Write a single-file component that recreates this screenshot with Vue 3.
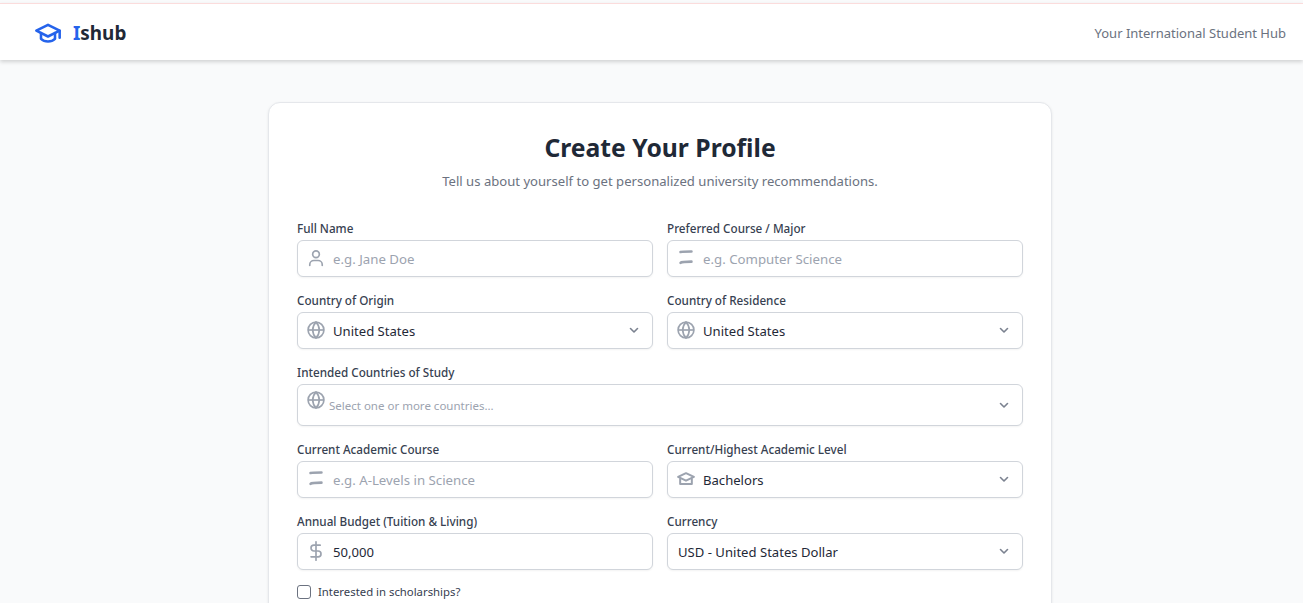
<template>
  <div class="page">
    <header class="topbar">
      <div class="brand">
        <svg class="brand-icon" viewBox="0 0 24 24" fill="none" stroke="currentColor" stroke-width="2.2" stroke-linecap="round" stroke-linejoin="round">
          <path d="M22 10v6" />
          <path d="M2 10l10-5 10 5-10 5z" />
          <path d="M6 12v5c3 3 9 3 12 0v-5" />
        </svg>
        <span class="brand-name"><span class="brand-i">I</span>shub</span>
      </div>
      <span class="tagline">Your International Student Hub</span>
    </header>

    <main class="content">
      <section class="card">
        <h1>Create Your Profile</h1>
        <p class="lead">Tell us about yourself to get personalized university recommendations.</p>

        <form class="form" @submit.prevent>
          <div class="field">
            <label>Full Name</label>
            <div class="control">
              <svg class="icon" viewBox="0 0 24 24" fill="none" stroke="currentColor" stroke-width="2" stroke-linecap="round" stroke-linejoin="round">
                <circle cx="12" cy="7.500" r="4" />
                <path d="M4.500 21v-1a5 5 0 0 1 5-5h5a5 5 0 0 1 5 5v1" />
              </svg>
              <input type="text" placeholder="e.g. Jane Doe" />
            </div>
          </div>

          <div class="field">
            <label>Preferred Course / Major</label>
            <div class="control">
              <svg class="icon" viewBox="0 0 24 24" fill="none" stroke="currentColor" stroke-width="3.200" stroke-linecap="round">
                <path d="M5.500 4.800c2-.6 8-.6 13-.6" />
                <path d="M5.500 17.800c1-1 3-1.400 13-1.400" />
              </svg>
              <input type="text" placeholder="e.g. Computer Science" />
            </div>
          </div>

          <div class="field" v-for="f in countryFields" :key="f">
            <label>{{ f }}</label>
            <div class="control">
              <svg class="icon" viewBox="0 0 24 24" fill="none" stroke="currentColor" stroke-width="2">
                <circle cx="12" cy="12" r="9.500" />
                <path d="M2.500 12h19" />
                <path d="M12 2.500c2.800 2.800 3.900 6 3.900 9.500s-1.100 6.700-3.900 9.500c-2.800-2.800-3.900-6-3.900-9.500s1.100-6.700 3.900-9.500z" />
              </svg>
              <select>
                <option>United States</option>
              </select>
              <svg class="chevron" viewBox="0 0 20 20" fill="none" stroke="currentColor" stroke-width="1.600" stroke-linecap="round" stroke-linejoin="round">
                <path d="M6.500 8.500l3.500 3.500 3.500-3.500" />
              </svg>
            </div>
          </div>

          <div class="field wide">
            <label>Intended Countries of Study</label>
            <div class="control multi">
              <svg class="icon" viewBox="0 0 24 24" fill="none" stroke="currentColor" stroke-width="2">
                <circle cx="12" cy="12" r="9.500" />
                <path d="M2.500 12h19" />
                <path d="M12 2.500c2.800 2.800 3.900 6 3.900 9.500s-1.100 6.700-3.900 9.500c-2.800-2.800-3.900-6-3.900-9.500s1.100-6.700 3.900-9.500z" />
              </svg>
              <span class="multi-hint">Select one or more countries...</span>
              <svg class="chevron" viewBox="0 0 20 20" fill="none" stroke="currentColor" stroke-width="1.600" stroke-linecap="round" stroke-linejoin="round">
                <path d="M6.500 8.500l3.500 3.500 3.500-3.500" />
              </svg>
            </div>
          </div>

          <div class="field">
            <label>Current Academic Course</label>
            <div class="control">
              <svg class="icon" viewBox="0 0 24 24" fill="none" stroke="currentColor" stroke-width="3.200" stroke-linecap="round">
                <path d="M5.500 4.800c2-.6 8-.6 13-.6" />
                <path d="M5.500 17.800c1-1 3-1.400 13-1.400" />
              </svg>
              <input type="text" placeholder="e.g. A-Levels in Science" />
            </div>
          </div>

          <div class="field">
            <label>Current/Highest Academic Level</label>
            <div class="control">
              <svg class="icon" viewBox="0 0 24 24" fill="none" stroke="currentColor" stroke-width="2.400" stroke-linejoin="round">
                <path d="M2.500 9.500L12 5l9.500 4.500L12 14z" />
                <path d="M5 11v7h14v-7" />
              </svg>
              <select>
                <option>Bachelors</option>
              </select>
              <svg class="chevron" viewBox="0 0 20 20" fill="none" stroke="currentColor" stroke-width="1.600" stroke-linecap="round" stroke-linejoin="round">
                <path d="M6.500 8.500l3.500 3.500 3.500-3.500" />
              </svg>
            </div>
          </div>

          <div class="field">
            <label>Annual Budget (Tuition &amp; Living)</label>
            <div class="control">
              <svg class="icon" viewBox="0 0 24 24" fill="none" stroke="currentColor" stroke-width="2" stroke-linecap="round" stroke-linejoin="round">
                <path d="M12 1v22" />
                <path d="M17 5H9.500a3.500 3.500 0 0 0 0 7h5a3.500 3.500 0 0 1 0 7H6" />
              </svg>
              <input type="text" value="50,000" />
            </div>
          </div>

          <div class="field">
            <label>Currency</label>
            <div class="control plain">
              <select>
                <option>USD - United States Dollar</option>
              </select>
              <svg class="chevron" viewBox="0 0 20 20" fill="none" stroke="currentColor" stroke-width="1.600" stroke-linecap="round" stroke-linejoin="round">
                <path d="M6.500 8.500l3.500 3.500 3.500-3.500" />
              </svg>
            </div>
          </div>

          <label class="check wide">
            <input type="checkbox" />
            <span>Interested in scholarships?</span>
          </label>
        </form>
      </section>
    </main>
  </div>
</template>

<script setup>
const countryFields = ['Country of Origin', 'Country of Residence']
</script>

<style>
html, body {
  overflow: hidden;
  height: 100%;
}
</style>

<style scoped>
.page {
  box-sizing: border-box;
  min-height: 100vh;
  padding-top: 3px;
  background: #f9fafb;
  font-family: "Noto Sans", "Open Sans", sans-serif;
  color: #1f2937;
}

.topbar {
  display: flex;
  align-items: center;
  justify-content: space-between;
  height: 54px;
  padding: 2px 17px 0 34px;
  background: #fff;
  border-top: 1px solid #fbdcdc;
  box-shadow: 0 2px 4px rgba(0, 0, 0, 0.16);
}

.brand {
  display: flex;
  align-items: center;
  gap: 11px;
}

.brand-icon {
  width: 28px;
  height: 28px;
  color: #2563eb;
}

.brand-name {
  font-size: 18.9px;
  font-weight: 700;
  color: #1f2937;
}

.brand-i { color: #2563eb; }

.tagline {
  font-size: 13px;
  color: #6b7280;
}

.content {
  display: flex;
  justify-content: center;
  padding: 42px 0 0 17px;
}

.card {
  box-sizing: border-box;
  width: 784px;
  padding: 28px;
  background: #fff;
  border: 1px solid #e5e7eb;
  border-radius: 12px;
  box-shadow: 0 1px 3px rgba(0, 0, 0, 0.08);
}

h1 {
  margin: 0;
  text-align: center;
  font-size: 24.7px;
  line-height: 34px;
  font-weight: 700;
  color: #1f2937;
}

.lead {
  margin: 5px 0 0;
  text-align: center;
  font-size: 13.1px;
  line-height: 22px;
  color: #6b7280;
}

.form {
  display: grid;
  grid-template-columns: 1fr 1fr;
  column-gap: 14px;
  row-gap: 15px;
  margin-top: 28px;
}

.wide { grid-column: 1 / -1; }

.field label {
  display: block;
  margin-bottom: 4px;
  font-size: 11.7px;
  line-height: 16px;
  font-weight: 500;
  color: #374151;
}

.control {
  position: relative;
  display: flex;
  align-items: center;
  box-sizing: border-box;
  height: 37px;
  background: #fff;
  border: 1px solid #d1d5db;
  border-radius: 6px;
  box-shadow: 0 1px 2px rgba(0, 0, 0, 0.05);
}

.control.multi { height: 42px; }

.icon {
  position: absolute;
  left: 8px;
  top: 7px;
  width: 20px;
  height: 20px;
  color: #9ca3af;
}

.control input,
.control select {
  flex: 1;
  width: 100%;
  height: 100%;
  padding: 0 30px 0 35px;
  border: 0;
  outline: none;
  background: transparent;
  appearance: none;
  font-family: inherit;
  font-size: 13.1px;
  color: #1f2937;
}

.control.plain select { padding-left: 10px; }

.control input::placeholder {
  color: #9ca3af;
  opacity: 1;
  font-size: 13.25px;
}

.chevron {
  position: absolute;
  right: 8px;
  top: 7px;
  width: 20px;
  height: 20px;
  color: #7b8290;
  pointer-events: none;
}

.multi .icon { top: 5px; }
.multi .chevron { top: 10px; }

.multi-hint {
  padding-left: 31px;
  font-size: 11.5px;
  color: #9ca3af;
}

.check {
  display: flex;
  align-items: center;
  gap: 7px;
  font-size: 11.35px;
  line-height: 14px;
  color: #374151;
}

.check input {
  width: 14px;
  height: 14px;
  margin: 0;
  appearance: none;
  background: #fff;
  border: 1px solid #6b7280;
  border-radius: 3px;
}
</style>
